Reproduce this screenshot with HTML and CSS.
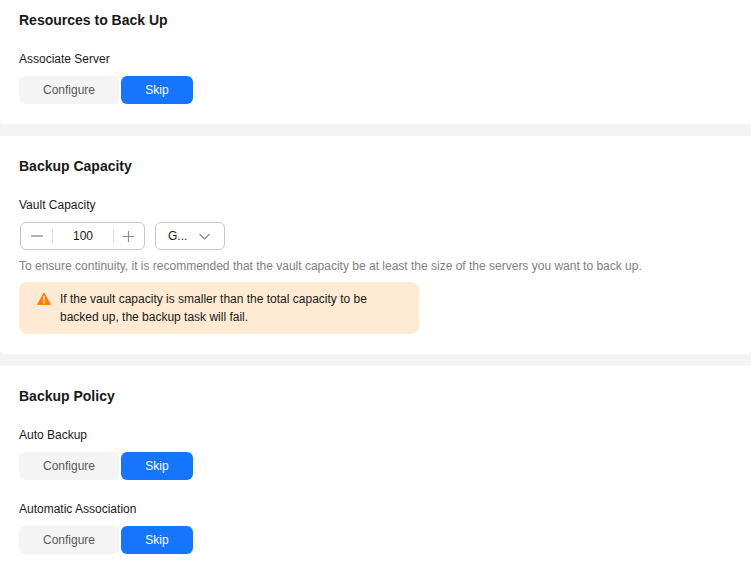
FILE: index.html
```html
<!DOCTYPE html>
<html lang="en">
<head>
    <meta charset="UTF-8">
    <meta name="viewport" content="width=device-width, initial-scale=1.0">
    <title>Buy Vault</title>
    <link rel="stylesheet" href="styles.css">
</head>
<body>
    <section class="card card-first">
        <h2>Resources to Back Up</h2>
        <div class="field">
            <div class="label">Associate Server</div>
            <div class="toggle">
                <button class="opt">Configure</button>
                <button class="opt active">Skip</button>
            </div>
        </div>
    </section>

    <section class="card">
        <h2>Backup Capacity</h2>
        <div class="field">
            <div class="label">Vault Capacity</div>
            <div class="capacity">
                <div class="stepper">
                    <span class="step">
                        <svg width="12" height="12" viewBox="0 0 12 12"><path d="M0 6h12" stroke="#8f8f8f" stroke-width="1.4"/></svg>
                    </span>
                    <span class="step-value">100</span>
                    <span class="step">
                        <svg width="11" height="11" viewBox="0 0 11 11"><path d="M0 5.5h11M5.5 0v11" stroke="#8f8f8f" stroke-width="1.2"/></svg>
                    </span>
                </div>
                <div class="unit">
                    <span>G...</span>
                    <svg width="11" height="7" viewBox="0 0 11 7"><path d="M0.5 1l5 5 5-5" fill="none" stroke="#8a8a8a" stroke-width="1.2"/></svg>
                </div>
            </div>
            <p class="hint">To ensure continuity, it is recommended that the vault capacity be at least the size of the servers you want to back up.</p>
            <div class="alert">
                <svg class="alert-icon" width="14" height="13" viewBox="0 0 14 13">
                    <path d="M7 1L13.4 12.4H0.6Z" fill="#ff8000" stroke="#ff8000" stroke-linejoin="round"/>
                    <path d="M7 4.2v4.4M7 9.6v1.6" stroke="#fff" stroke-width="1.4"/>
                </svg>
                <p>If the vault capacity is smaller than the total capacity to be backed up, the backup task will fail.</p>
            </div>
        </div>
    </section>

    <section class="card">
        <h2>Backup Policy</h2>
        <div class="field">
            <div class="label">Auto Backup</div>
            <div class="toggle">
                <button class="opt">Configure</button>
                <button class="opt active">Skip</button>
            </div>
        </div>
        <div class="field">
            <div class="label">Automatic Association</div>
            <div class="toggle">
                <button class="opt">Configure</button>
                <button class="opt active">Skip</button>
            </div>
        </div>
    </section>
</body>
</html>
```

FILE: styles.css
```css
body {
    margin: 0;
    height: 569px;
    overflow: hidden;
    display: flex;
    flex-direction: column;
    gap: 12px;
    font-family: "Liberation Sans", Arial, sans-serif;
    font-size: 12px;
    color: #191919;
    background-color: #f4f4f4;
}
.card {
    background: #fff;
    padding: 20px 19px;
    border-radius: 0 0 4px 4px;
}
.card-first {
    padding-top: 10px;
}
.card:last-child {
    flex: 1;
}
h2 {
    margin: 0;
    font-size: 14px;
    line-height: 20px;
    font-weight: bold;
    color: #191919;
}
.field {
    margin-top: 20px;
}
.label {
    line-height: 18px;
    margin-bottom: 8px;
}
.toggle {
    display: flex;
    gap: 2px;
}
.opt {
    width: 100px;
    height: 28px;
    padding: 0;
    border: 0;
    border-radius: 6px;
    background: #f4f4f4;
    color: #595959;
    font-family: inherit;
    font-size: 12px;
}
.opt.active {
    width: 72px;
    background: #1476ff;
    color: #fff;
}
.capacity {
    display: flex;
    gap: 10px;
    margin-left: 1px;
}
.stepper, .unit {
    box-sizing: border-box;
    height: 28px;
    border: 1px solid #c7c7c7;
    border-radius: 6px;
    display: flex;
    align-items: center;
}
.stepper {
    width: 125px;
}
.step {
    box-sizing: border-box;
    width: 32px;
    height: 14px;
    display: flex;
    align-items: center;
    justify-content: center;
}
.step:first-child {
    border-right: 1px solid #dfdfdf;
}
.step:last-child {
    width: 31px;
    padding-right: 2px;
    border-left: 1px solid #dfdfdf;
}
.step-value {
    flex: 1;
    text-align: center;
}
.unit {
    width: 70px;
    padding: 0 14px 0 12px;
    justify-content: space-between;
}
.hint {
    margin: 7px 0 0;
    line-height: 18px;
    color: #808080;
}
.alert {
    box-sizing: border-box;
    width: 400px;
    margin-top: 7px;
    padding: 8px 18px;
    border-radius: 8px;
    background: #ffebd3;
    display: flex;
    gap: 9px;
}
.alert-icon {
    flex: none;
    margin-top: 2px;
}
.alert p {
    margin: 0;
    line-height: 18px;
}
```
